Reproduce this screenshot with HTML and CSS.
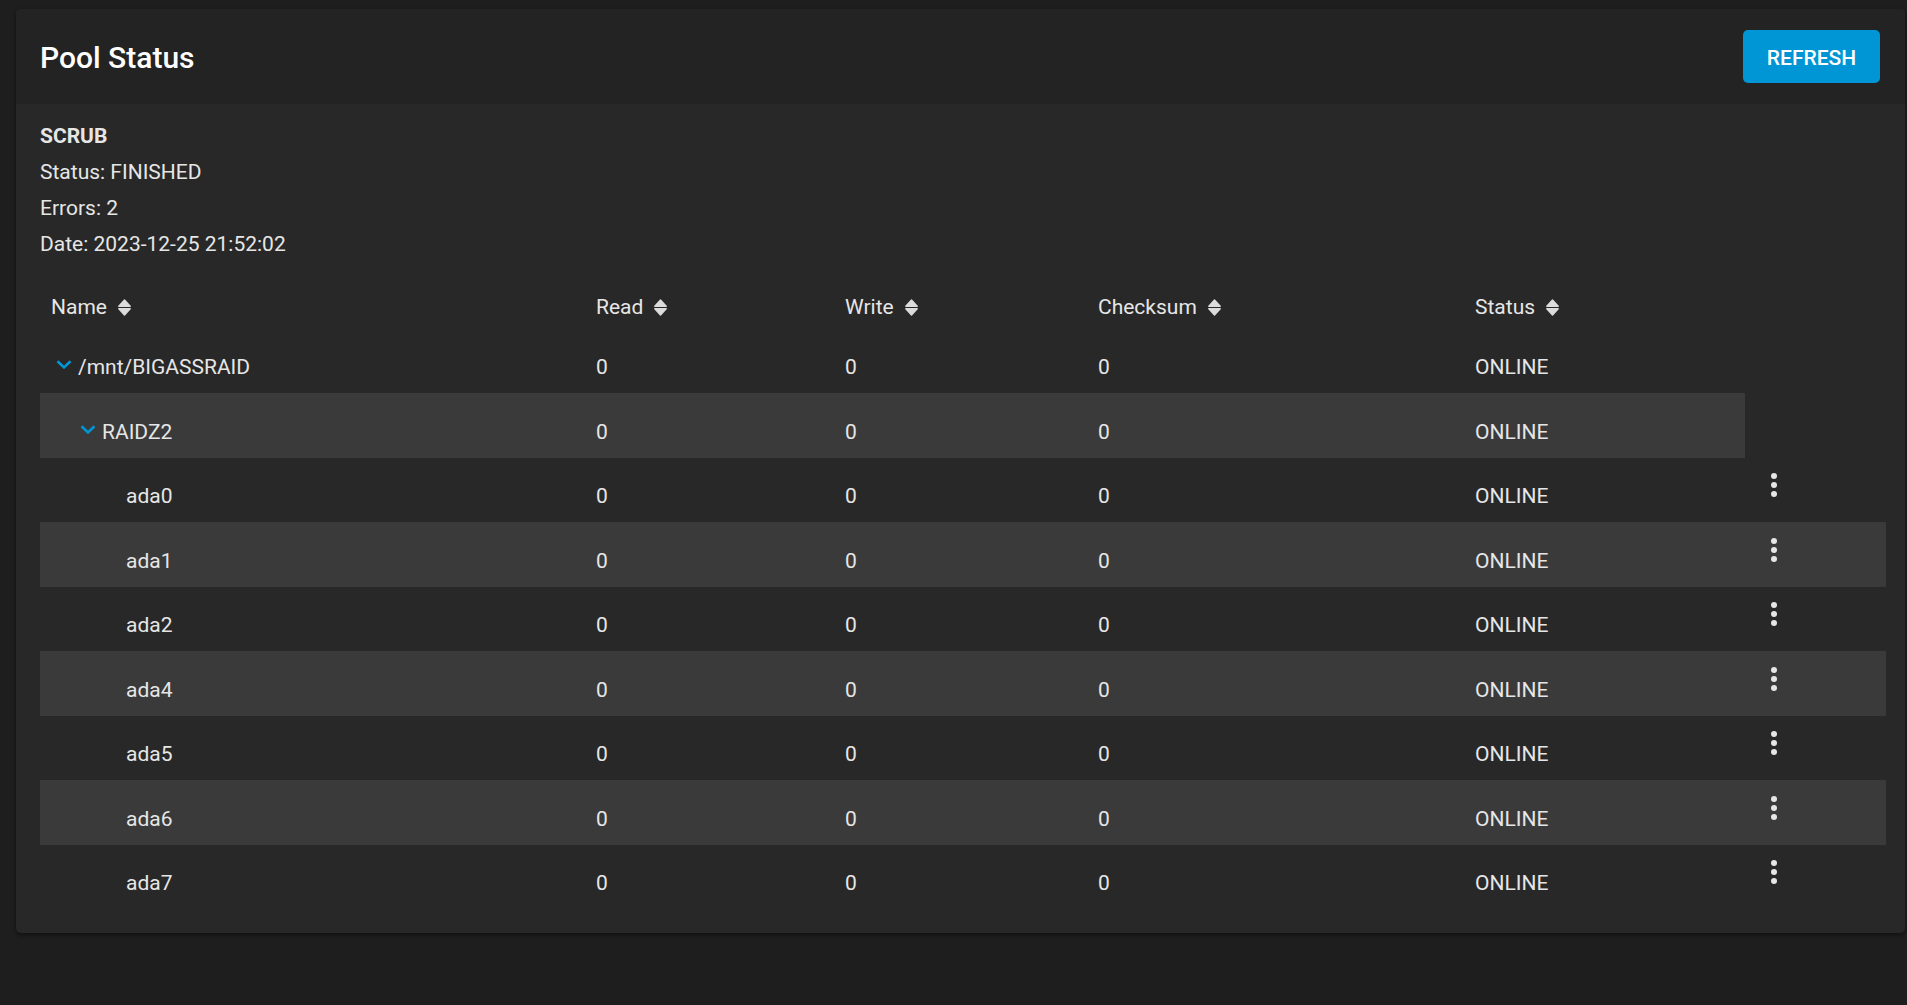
FILE: index.html
```html
<!DOCTYPE html>
<html lang="en">
<head>
    <meta charset="UTF-8">
    <meta name="viewport" content="width=device-width, initial-scale=1.0">
    <title>Pool Status</title>
    <link rel="stylesheet" href="styles.css">
</head>
<body>

<div class="page">
    <div class="card">
        <div class="card-header">
            <h2 class="card-title">Pool Status</h2>
            <button class="btn-refresh">REFRESH</button>
        </div>

        <div class="card-body">
            <!-- Scrub summary -->
            <div class="scrub">
                <div class="scrub-title">SCRUB</div>
                <div>Status: FINISHED</div>
                <div>Errors: 2</div>
                <div>Date: 2023-12-25 21:52:02</div>
            </div>

            <div class="pool-table">
                <div class="tr th-row">
                    <div class="th">Name <svg class="sort" viewBox="0 0 13 17"><path d="M6.5 1L12.2 7.2H0.8Z"/><path d="M0.8 9.8H12.2L6.5 16Z"/></svg></div>
                    <div class="th">Read <svg class="sort" viewBox="0 0 13 17"><path d="M6.5 1L12.2 7.2H0.8Z"/><path d="M0.8 9.8H12.2L6.5 16Z"/></svg></div>
                    <div class="th">Write <svg class="sort" viewBox="0 0 13 17"><path d="M6.5 1L12.2 7.2H0.8Z"/><path d="M0.8 9.8H12.2L6.5 16Z"/></svg></div>
                    <div class="th">Checksum <svg class="sort" viewBox="0 0 13 17"><path d="M6.5 1L12.2 7.2H0.8Z"/><path d="M0.8 9.8H12.2L6.5 16Z"/></svg></div>
                    <div class="th">Status <svg class="sort" viewBox="0 0 13 17"><path d="M6.5 1L12.2 7.2H0.8Z"/><path d="M0.8 9.8H12.2L6.5 16Z"/></svg></div>
                </div>

                <div class="tr parent">
                    <div class="td name lvl-0"><svg class="toggle" viewBox="0 0 16 9"><polyline points="1.5,1.2 8,7.4 14.5,1.2"/></svg><span>/mnt/BIGASSRAID</span></div>
                    <div class="td">0</div>
                    <div class="td">0</div>
                    <div class="td">0</div>
                    <div class="td">ONLINE</div>
                </div>

                <div class="tr parent">
                    <div class="td name lvl-1"><svg class="toggle" viewBox="0 0 16 9"><polyline points="1.5,1.2 8,7.4 14.5,1.2"/></svg><span>RAIDZ2</span></div>
                    <div class="td">0</div>
                    <div class="td">0</div>
                    <div class="td">0</div>
                    <div class="td">ONLINE</div>
                </div>

                <div class="tr">
                    <div class="td name lvl-2"><span class="spacer"></span><span>ada0</span></div>
                    <div class="td">0</div>
                    <div class="td">0</div>
                    <div class="td">0</div>
                    <div class="td">ONLINE</div>
                    <div class="td actions"><svg class="kebab" viewBox="0 0 8 26"><circle cx="4" cy="4" r="3"/><circle cx="4" cy="13" r="3"/><circle cx="4" cy="22" r="3"/></svg></div>
                </div>

                <div class="tr">
                    <div class="td name lvl-2"><span class="spacer"></span><span>ada1</span></div>
                    <div class="td">0</div>
                    <div class="td">0</div>
                    <div class="td">0</div>
                    <div class="td">ONLINE</div>
                    <div class="td actions"><svg class="kebab" viewBox="0 0 8 26"><circle cx="4" cy="4" r="3"/><circle cx="4" cy="13" r="3"/><circle cx="4" cy="22" r="3"/></svg></div>
                </div>

                <div class="tr">
                    <div class="td name lvl-2"><span class="spacer"></span><span>ada2</span></div>
                    <div class="td">0</div>
                    <div class="td">0</div>
                    <div class="td">0</div>
                    <div class="td">ONLINE</div>
                    <div class="td actions"><svg class="kebab" viewBox="0 0 8 26"><circle cx="4" cy="4" r="3"/><circle cx="4" cy="13" r="3"/><circle cx="4" cy="22" r="3"/></svg></div>
                </div>

                <div class="tr">
                    <div class="td name lvl-2"><span class="spacer"></span><span>ada4</span></div>
                    <div class="td">0</div>
                    <div class="td">0</div>
                    <div class="td">0</div>
                    <div class="td">ONLINE</div>
                    <div class="td actions"><svg class="kebab" viewBox="0 0 8 26"><circle cx="4" cy="4" r="3"/><circle cx="4" cy="13" r="3"/><circle cx="4" cy="22" r="3"/></svg></div>
                </div>

                <div class="tr">
                    <div class="td name lvl-2"><span class="spacer"></span><span>ada5</span></div>
                    <div class="td">0</div>
                    <div class="td">0</div>
                    <div class="td">0</div>
                    <div class="td">ONLINE</div>
                    <div class="td actions"><svg class="kebab" viewBox="0 0 8 26"><circle cx="4" cy="4" r="3"/><circle cx="4" cy="13" r="3"/><circle cx="4" cy="22" r="3"/></svg></div>
                </div>

                <div class="tr">
                    <div class="td name lvl-2"><span class="spacer"></span><span>ada6</span></div>
                    <div class="td">0</div>
                    <div class="td">0</div>
                    <div class="td">0</div>
                    <div class="td">ONLINE</div>
                    <div class="td actions"><svg class="kebab" viewBox="0 0 8 26"><circle cx="4" cy="4" r="3"/><circle cx="4" cy="13" r="3"/><circle cx="4" cy="22" r="3"/></svg></div>
                </div>

                <div class="tr">
                    <div class="td name lvl-2"><span class="spacer"></span><span>ada7</span></div>
                    <div class="td">0</div>
                    <div class="td">0</div>
                    <div class="td">0</div>
                    <div class="td">ONLINE</div>
                    <div class="td actions"><svg class="kebab" viewBox="0 0 8 26"><circle cx="4" cy="4" r="3"/><circle cx="4" cy="13" r="3"/><circle cx="4" cy="22" r="3"/></svg></div>
                </div>
            </div>
        </div>
    </div>
</div>

</body>
</html>
```

FILE: styles.css
```css
body {
    margin: 0;
    background-color: #1e1e1e;
    font-family: Roboto, "Liberation Sans", Arial, sans-serif;
    font-size: 21px;
    color: #e6e6e6;
    height: 100vh;
    overflow: hidden;
}

.page {
    padding: 9px 2px 0 16px;
}

.card {
    background-color: #282828;
    border-radius: 5px;
    box-shadow: 0 2px 4px rgba(0, 0, 0, 0.45);
    overflow: hidden;
}

.card-header {
    height: 95px;
    box-sizing: border-box;
    background-color: #232323;
    display: flex;
    justify-content: space-between;
    align-items: center;
    padding: 2px 25px 0 24px;
}

.card-title {
    margin: 0;
    font-size: 30px;
    font-weight: 500;
    color: #ffffff;
}

.btn-refresh {
    width: 137px;
    height: 53px;
    border: none;
    border-radius: 5px;
    background-color: #0095d5;
    color: #ffffff;
    font-family: inherit;
    font-size: 21px;
    font-weight: 500;
    padding: 4px 0 0 0;
    margin-top: -3px;
}

.card-body {
    padding: 14px 19px 24px 24px;
}

/* Scrub summary */
.scrub {
    line-height: 36px;
    margin-bottom: 2px;
}

.scrub-title {
    font-weight: 700;
}

/* Pool table */
.tr {
    display: grid;
    grid-template-columns: 545px 249px 253px 377px 281px 141px;
    height: 64.5px;
}

.tr.parent {
    grid-template-columns: 545px 249px 253px 377px 281px;
    width: max-content;
}

.pool-table .tr:nth-child(odd) {
    background-color: #3a3a3a;
}

.pool-table .th-row {
    background-color: transparent !important;
}

.th {
    display: flex;
    align-items: flex-end;
    padding: 0 0 10px 11px;
}

.sort {
    width: 13px;
    height: 17px;
    margin: 0 0 3px 11px;
    fill: #dcdcdc;
    stroke: #dcdcdc;
    stroke-width: 1.4;
    stroke-linejoin: round;
}

.td {
    display: flex;
    align-items: center;
    padding: 13px 0 0 11px;
}

.name.lvl-1 {
    padding-left: 35px;
}

.name.lvl-2 {
    padding-left: 59px;
}

.toggle {
    width: 16px;
    height: 9px;
    margin: 0 6px 5px 5px;
    fill: none;
    stroke: #0095d5;
    stroke-width: 2.6;
}

.spacer {
    display: inline-block;
    width: 27px;
}

.td.actions {
    padding: 0 0 9.5px 25px;
}

.kebab {
    width: 8px;
    height: 26px;
    fill: #e6e6e6;
}
```
